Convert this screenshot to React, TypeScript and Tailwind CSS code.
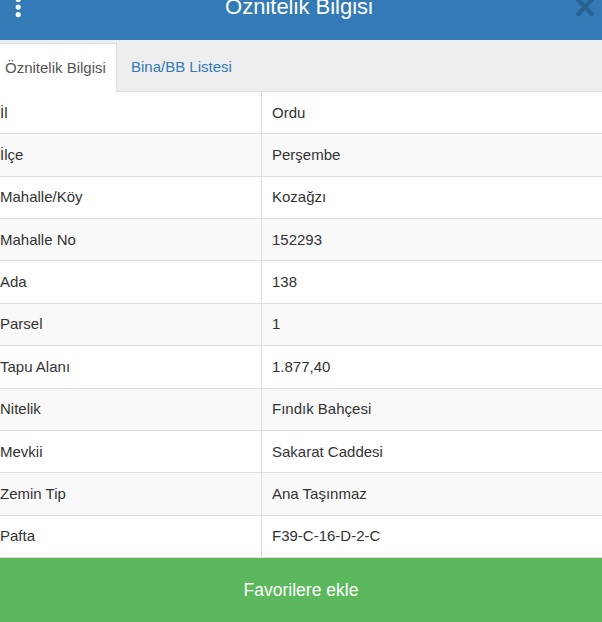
import React from 'react';

const rows: [string, string][] = [
  ['İl', 'Ordu'],
  ['İlçe', 'Perşembe'],
  ['Mahalle/Köy', 'Kozağzı'],
  ['Mahalle No', '152293'],
  ['Ada', '138'],
  ['Parsel', '1'],
  ['Tapu Alanı', '1.877,40'],
  ['Nitelik', 'Fındık Bahçesi'],
  ['Mevkii', 'Sakarat Caddesi'],
  ['Zemin Tip', 'Ana Taşınmaz'],
  ['Pafta', 'F39-C-16-D-2-C'],
];

export default function App() {
  return (
    <div className="w-[602px] h-[622px] overflow-hidden flex flex-col bg-white font-['Liberation_Sans',Arial,sans-serif]">
      {/* header, scrolled a bit so the title is cut at the top */}
      <div className="relative h-10 shrink-0 bg-[#337ab7] overflow-hidden">
        <svg className="absolute left-[15px] top-0" width="7" height="20" viewBox="0 0 7 20">
          <circle cx="3.2" cy="-0.3" r="2.6" fill="#fff" />
          <circle cx="3.2" cy="7.1" r="2.6" fill="#fff" />
          <circle cx="3.2" cy="14.6" r="2.6" fill="#fff" />
        </svg>
        <div className="mt-[-4px] text-center text-[22px] leading-[22px] text-white pr-[4px]">Öznitelik Bilgisi</div>
        <svg className="absolute left-[576px] top-0" width="18" height="16" viewBox="0 0 18 16">
          <path d="M2.5 0 L15.5 14 M15.5 0 L2.5 14" stroke="#296292" strokeWidth="4.2" strokeLinecap="square" />
        </svg>
      </div>

      {/* tabs */}
      <div className="h-[52px] shrink-0 bg-[#eeeeee] border-b border-[#dddddd] flex items-end text-[15px] leading-5">
        <div className="h-[49px] w-[117px] -mb-px bg-white border-t border-r border-[#dddddd] flex items-center pl-[5px] text-[#555555]">
          Öznitelik Bilgisi
        </div>
        <div className="h-[48px] flex items-center pl-[14px] text-[#337ab7]">Bina/BB Listesi</div>
      </div>

      {/* attribute table */}
      <div className="flex-1 ml-[-10px] text-[15px] leading-5 text-[#333333]">
        {rows.map(([k, v], i) => (
          <div
            key={k}
            className={`flex h-[42.36px] border-b border-[#dddddd] ${i % 2 === 1 ? 'bg-[#f9f9f9]' : 'bg-white'}`}
          >
            <div className="w-[272px] shrink-0 border-r border-[#dddddd] flex items-center pl-[10px]">{k}</div>
            <div className="flex-1 flex items-center pl-[10px]">{v}</div>
          </div>
        ))}
      </div>

      <button className="h-16 shrink-0 bg-[#5cb85c] text-white text-[17.5px]">Favorilere ekle</button>
    </div>
  );
}
